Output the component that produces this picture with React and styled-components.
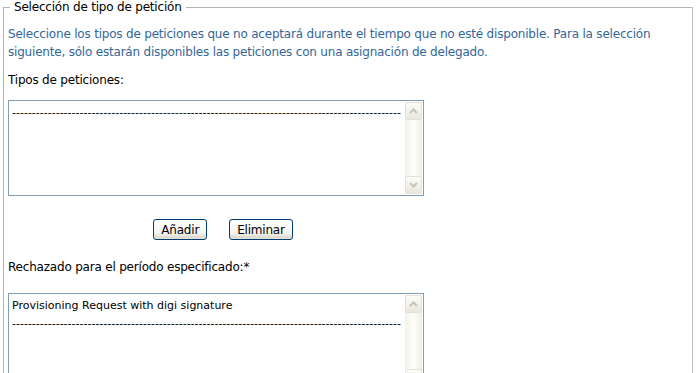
import React from 'react';
import styled, { createGlobalStyle } from 'styled-components';

const GlobalStyle = createGlobalStyle`
  body {
    margin: 0;
    background: #ffffff;
    font-family: "DejaVu Sans", Verdana, sans-serif;
    font-size: 12px;
    letter-spacing: -0.2px;
    color: #000000;
  }
`;

const Page = styled.div`
  width: 696px;
  height: 373px;
  overflow: hidden;
  padding: 0 3px;
  box-sizing: border-box;
`;

const Fieldset = styled.fieldset`
  margin: 0;
  padding: 11px 4px 12px 4px;
  border: 1px solid #b4b4b4;
  border-right-color: #c0c0c0;
  min-width: 0;
`;

const Legend = styled.legend`
  margin-left: 2px;
  padding: 0 4px;
  font-size: 12px;
  line-height: 14px;
  color: #000000;
`;

const Intro = styled.p`
  margin: 0 0 11px;
  color: #336699;
  line-height: 18px;
`;

const Label = styled.div`
  margin-bottom: ${ p => p.gap }px;
  line-height: 16px;
`;

const ListBox = styled.div`
  display: flex;
  width: 416px;
  height: ${ p => p.height }px;
  border: 1px solid #7f9db9;
  background: #ffffff;
  box-sizing: border-box;
`;

const ListItems = styled.div`
  flex: 1;
  min-width: 0;
  padding: 3px 3px;
  overflow: hidden;
  white-space: nowrap;
  font-size: 11px;
  letter-spacing: 0;
`;

const ListItem = styled.div`
  line-height: 18px;
  overflow: hidden;
`;

const ScrollBar = styled.div`
  display: flex;
  flex-direction: column;
  justify-content: space-between;
  width: 17px;
  margin: 1px 1px 1px 0;
  background: linear-gradient(to right, #f3f1ea, #fefefb 50%, #efede4);
`;

const ScrollButton = styled.div`
  height: 16px;
  border: 1px solid #e4e2d8;
  border-radius: 2px;
  background: linear-gradient(to bottom, #fcfcf8, #e9e7dd);
  display: flex;
  align-items: center;
  justify-content: center;
`;

const Buttons = styled.div`
  display: flex;
  justify-content: center;
  gap: 22px;
  width: 416px;
  padding: 23px 0 19px 14px;
  box-sizing: border-box;
`;

const Button = styled.button`
  height: 21px;
  padding: 0 7px;
  font-family: "DejaVu Sans", Verdana, sans-serif;
  font-size: 12px;
  letter-spacing: -0.2px;
  color: #000000;
  border: 1px solid #003c74;
  border-radius: 3px;
  background: linear-gradient(to bottom, #ffffff, #f4f3ee 70%, #d6d0c5);
  box-shadow: inset 0 -1px 0 #e3e0d6;
`;

const Arrow = ({ up }) => (
  <svg width="9" height="6" viewBox="0 0 9 6">
    <path
      d={ up ? "M1 5 L4.5 1.5 L8 5" : "M1 1 L4.5 4.5 L8 1" }
      fill="none"
      stroke="#c6c3b6"
      strokeWidth="2"
    />
  </svg>
);

const Dashes = "-".repeat(98);

const List = ({ height, items }) => (
  <ListBox height={ height }>
    <ListItems>
      { items.map((item, i) => <ListItem key={ i }>{ item }</ListItem>) }
    </ListItems>
    <ScrollBar>
      <ScrollButton><Arrow up /></ScrollButton>
      <ScrollButton><Arrow /></ScrollButton>
    </ScrollBar>
  </ListBox>
);

export default function App() {
  return (
    <Page>
      <GlobalStyle />
      <Fieldset>
        <Legend>Selección de tipo de petición</Legend>
        <Intro>
          Seleccione los tipos de peticiones que no aceptará durante el tiempo que no esté disponible. Para la selección<br />
          siguiente, sólo estarán disponibles las peticiones con una asignación de delegado.
        </Intro>
        <Label gap={ 12 }>Tipos de peticiones:</Label>
        <List height={ 96 } items={ [Dashes] } />
        <Buttons>
          <Button>Añadir</Button>
          <Button>Eliminar</Button>
        </Buttons>
        <Label gap={ 18 }>Rechazado para el período especificado:*</Label>
        <List height={ 96 } items={ ["Provisioning Request with digi signature", Dashes] } />
      </Fieldset>
    </Page>
  );
}
